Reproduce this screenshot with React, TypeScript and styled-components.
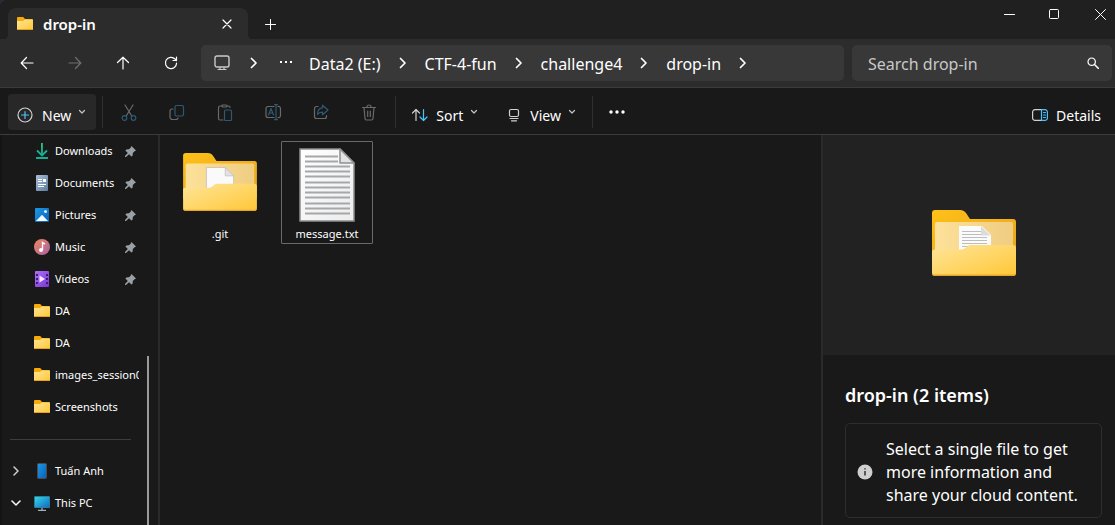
import React from 'react';
import styled, { createGlobalStyle } from 'styled-components';

const GlobalStyle = createGlobalStyle`
  *, *::before, *::after { box-sizing: border-box; }
  body {
    margin: 0;
    background: #2b2b36;
    color: #ffffff;
    font-family: 'Noto Sans', 'Open Sans', sans-serif;
  }
  button, input { font: inherit; color: inherit; }
  button { border: 0; padding: 0; background: none; }
  svg { display: block; flex: none; }
`;

const Window = styled.div`
  display: flex;
  flex-direction: column;
  min-height: 100vh;
  background: #191919;
  border-top-left-radius: 8px;
  overflow: hidden;
`;

const TitleBar = styled.header`
  display: flex;
  height: 39px;
  padding-left: 8px;
  background: #202020;
`;

const Tab = styled.div`
  position: relative;
  display: flex;
  align-items: center;
  width: 240px;
  margin-top: 8px;
  padding: 0 13px 0 9px;
  border-radius: 8px 8px 0 0;
  background: #2c2c2c;

  &::before,
  &::after {
    content: '';
    position: absolute;
    bottom: 0;
    width: 4px;
    height: 4px;
  }
  &::before {
    right: 100%;
    background: radial-gradient(circle at 0 0, transparent 4px, #2c2c2c 4px);
  }
  &::after {
    left: 100%;
    background: radial-gradient(circle at 100% 0, transparent 4px, #2c2c2c 4px);
  }
`;

const TabTitle = styled.span`
  flex: 1;
  margin-left: 10px;
  font-size: 15px;
  font-weight: 600;
  line-height: 20px;
`;

const TabClose = styled.button`
  display: grid;
  place-items: center;
  width: 16px;
  height: 16px;
`;

const NewTab = styled.button`
  display: grid;
  place-items: center;
  width: 45px;
  height: 32px;
  margin-top: 8px;
`;

const Captions = styled.div`
  display: flex;
  margin-left: auto;
`;

const CaptionButton = styled.button`
  display: grid;
  place-items: center;
  width: 45px;
  height: 28px;
  &:last-child {
    justify-items: end;
    width: 38px;
    padding-right: 9px;
  }
`;

const NavBar = styled.nav`
  display: flex;
  align-items: center;
  height: 49px;
  padding: 0 3px;
  border-bottom: 1px solid #3b3b3b;
  background: #2c2c2c;
`;

const NavButton = styled.button`
  display: grid;
  place-items: center;
  width: 48px;
  height: 36px;
  color: #ffffff;
  &:disabled { color: #6e6e6e; }
`;

const AddressBar = styled.div`
  display: flex;
  flex: 1;
  align-items: center;
  min-width: 0;
  height: 36px;
  margin: 0 8px 0 6px;
  border-radius: 5px;
  background: #383838;
  overflow: hidden;
`;

const AddressButton = styled.button<{ $width: number }>`
  display: grid;
  flex: none;
  place-items: center;
  width: ${({ $width }) => $width}px;
  height: 34px;
`;

const Crumb = styled.a`
  padding-top: 2px;
  color: #ffffff;
  font-size: 16px;
  line-height: 22px;
  white-space: nowrap;
  text-decoration: none;
`;

const SearchBox = styled.label`
  display: flex;
  align-items: center;
  width: 260px;
  height: 36px;
  padding: 0 13px 0 16px;
  border-radius: 5px;
  background: #383838;
`;

const SearchInput = styled.input`
  flex: 1;
  min-width: 0;
  padding: 2px 0 0;
  border: 0;
  outline: 0;
  background: none;
  font-size: 16px;
  line-height: 22px;
  &::placeholder { color: #c8c8c8; opacity: 1; }
`;

const Toolbar = styled.div`
  display: flex;
  align-items: center;
  height: 47px;
  padding: 2px 2px 0 4px;
  border-bottom: 1px solid #3b3b3b;
  background: #191919;
`;

const CommandGroup = styled.div`
  display: flex;
  gap: 8px;
  padding: 0 4px;
`;

const CommandButton = styled.button<{ $filled?: boolean }>`
  display: flex;
  flex: none;
  align-items: center;
  height: 36px;
  padding: 6px 8px 0;
  border-radius: 4px;
  background: ${({ $filled }) => ($filled ? '#282828' : 'transparent')};
  font-size: 14px;
  line-height: 20px;
`;

const CommandLabel = styled.span`
  margin-left: 8px;
  padding-top: 2px;
`;

const CommandChevron = styled.span`
  padding: 0 2px 6px 7px;
`;

const ToolButton = styled.button`
  display: grid;
  flex: none;
  place-items: center;
  width: 48px;
  height: 36px;
`;

const MoreButton = styled(ToolButton)`
  width: 44px;
`;

const ToolDivider = styled.div`
  flex: none;
  width: 1px;
  height: 32px;
  margin: 0 2px;
  background: #2f2f2f;
`;

const Spacer = styled.div`
  flex: 1;
`;

const Body = styled.div`
  display: flex;
  flex: 1;
`;

const Sidebar = styled.aside`
  display: flex;
  flex: none;
  width: 160px;
  border-left: 2px solid #141414;
  border-right: 2px solid #2a2a2a;
`;

const SideList = styled.nav`
  width: 137px;
  overflow: hidden;
`;

const SideLink = styled.a`
  display: flex;
  align-items: center;
  height: 32px;
  color: #ffffff;
  font-size: 11px;
  line-height: 16px;
  white-space: nowrap;
  text-decoration: none;
`;

const ExpandSlot = styled.span`
  display: grid;
  flex: none;
  place-items: center;
  width: 28px;
  margin-right: 4px;
`;

const SideLabel = styled.span`
  flex: 1;
  margin-left: 5px;
`;

const PinSlot = styled.span`
  margin-right: 3px;
`;

const SideDivider = styled.hr`
  height: 1px;
  margin: 16px 8px 15px;
  border: 0;
  background: #3d3d3d;
`;

const ScrollTrack = styled.div`
  display: flex;
  flex: 1;
  padding: 221px 0 0 8px;
`;

const ScrollThumb = styled.div`
  width: 2px;
  background: #9a9a9a;
`;

const FileArea = styled.main`
  display: flex;
  flex: 1;
  align-items: flex-start;
  gap: 15px;
  min-width: 0;
  padding: 6px 14px;
`;

const FileTile = styled.button<{ $focused?: boolean }>`
  display: flex;
  flex-direction: column;
  align-items: center;
  width: 92px;
  padding: 6px 0 0;
  border: 1px solid ${({ $focused }) => ($focused ? '#6a6a6a' : 'transparent')};
  border-radius: 1px;
`;

const FileName = styled.span`
  margin-top: 3px;
  font-size: 11px;
  line-height: 18px;
`;

const Details = styled.aside`
  flex: none;
  width: 294px;
  border-left: 2px solid #2a2a2a;
`;

const Preview = styled.div`
  display: grid;
  place-items: center;
  height: 220px;
  padding: 0 0 4px 10px;
  background: #222222;
`;

const DetailsInfo = styled.div`
  padding: 28px 13px 7px 22px;
`;

const DetailsTitle = styled.h2`
  margin: 0 0 16px;
  font-size: 18px;
  font-weight: 600;
  line-height: 24px;
`;

const Notice = styled.div`
  display: flex;
  align-items: center;
  gap: 13px;
  padding: 12px 11px 10px;
  border: 1px solid #2d2d2d;
  border-radius: 5px;
`;

const NoticeText = styled.p`
  margin: 0;
  padding-top: 2px;
  font-size: 16px;
  line-height: 23px;
`;

const Glyph = ({ w = 16, h = 16, children }: { w?: number; h?: number; children: React.ReactNode }) => (
  <svg width={w} height={h} viewBox={`0 0 ${w} ${h}`} fill="none" stroke="currentColor" strokeWidth="1.2" strokeLinecap="round" strokeLinejoin="round" aria-hidden="true">
    {children}
  </svg>
);

const GradientDefs = styled.svg`
  position: absolute;
`;

const Gradients = () => (
  <GradientDefs width="0" height="0" aria-hidden="true">
    <defs>
      <linearGradient id="front" x1="0" y1="0" x2="1" y2="1">
        <stop offset="0" stopColor="#ffe599" />
        <stop offset="1" stopColor="#ffc736" />
      </linearGradient>
      <linearGradient id="back" x1="0" y1="0" x2="1" y2="1">
        <stop offset="0" stopColor="#ffc01a" />
        <stop offset="1" stopColor="#e8a317" />
      </linearGradient>
      <linearGradient id="inside" x1="0" y1="0" x2="1" y2="0">
        <stop offset="0" stopColor="#fde19a" />
        <stop offset="1" stopColor="#efcd82" />
      </linearGradient>
      <linearGradient id="paper" x1="0" y1="0" x2="1" y2="1">
        <stop offset="0" stopColor="#ffffff" />
        <stop offset="1" stopColor="#ececec" />
      </linearGradient>
      <linearGradient id="down" x1="0" y1="0" x2="0" y2="1">
        <stop offset="0" stopColor="#2fc77c" />
        <stop offset="1" stopColor="#12a89a" />
      </linearGradient>
      <linearGradient id="doc" x1="0" y1="0" x2="1" y2="1">
        <stop offset="0" stopColor="#a9bfd6" />
        <stop offset="1" stopColor="#5d7da0" />
      </linearGradient>
      <linearGradient id="pic" x1="0" y1="0" x2="1" y2="1">
        <stop offset="0" stopColor="#1c9ae6" />
        <stop offset="1" stopColor="#0a5fb8" />
      </linearGradient>
      <linearGradient id="music" x1="0" y1="0" x2="1" y2="1">
        <stop offset="0" stopColor="#f0885a" />
        <stop offset="1" stopColor="#a860a8" />
      </linearGradient>
      <linearGradient id="video" x1="0" y1="0" x2="1" y2="1">
        <stop offset="0" stopColor="#b071f5" />
        <stop offset="1" stopColor="#7a35d8" />
      </linearGradient>
      <linearGradient id="screen" x1="0" y1="0" x2="1" y2="1">
        <stop offset="0" stopColor="#36dbe0" />
        <stop offset="1" stopColor="#1166c9" />
      </linearGradient>
    </defs>
  </GradientDefs>
);

const SmallFolder = () => (
  <svg width="16" height="16" viewBox="0 0 16 16" aria-hidden="true">
    <path d="M0 2a1 1 0 0 1 1-1h5.200L8 3h7a1 1 0 0 1 1 1v8H0z" fill="#f7ab0b" />
    <path d="M0 5h6l2-1.600h7a1 1 0 0 1 1 1V13a1 1 0 0 1-1 1H1a1 1 0 0 1-1-1z" fill="url(#front)" />
    <path d="M0 13h16a1 1 0 0 1-1 1H1a1 1 0 0 1-1-1z" fill="#e6a41c" />
  </svg>
);

const BigFolder = ({ width, height, lined }: { width: number; height: number; lined?: boolean }) => (
  <svg width={width} height={height} viewBox="0 0 84 66" aria-hidden="true">
    <path d="M0 3a3 3 0 0 1 3-3h25c3 0 5 1.500 6 3l4 6h43a3 3 0 0 1 3 3v40H0z" fill="url(#back)" />
    <path d="M3 14a2 2 0 0 1 2-2h74a2 2 0 0 1 2 2v28H3z" fill="url(#inside)" />
    {lined ? (
      <>
        <path d="M27 16h23l9 9v20H27z" fill="#fbfbfb" />
        <path d="M30 21.500h19M30 24.500h19M30 27.500h25M30 30.500h25M30 33.500h25M30 36.500h25" stroke="#bdbdbd" />
        <path d="M49 16l9.500 9.500H49z" fill="#dcdcdc" />
      </>
    ) : (
      <>
        <path d="M26.500 16.500H48l9.500 9.500v20h-31z" fill="#fafafa" stroke="#c9c2b0" />
        <path d="M48 16.500V26h9.500z" fill="#e2e2e2" stroke="#c4c4c4" />
      </>
    )}
    <path d="M0 41a3 3 0 0 1 3-1.500h25c3 0 4-.5 6-2l1-1c1.500-1.200 2.500-1.500 4-1.500h42a3 3 0 0 1 3 3v25a3 3 0 0 1-3 3H3a3 3 0 0 1-3-3z" fill="url(#front)" />
    <path d="M0 63a3 2 0 0 0 3 1.500h78a3 2 0 0 0 3-1.500a3 3 0 0 1-3 3H3a3 3 0 0 1-3-3z" fill="#e5a62a" />
  </svg>
);

const TextFile = () => (
  <svg width="56" height="74" viewBox="0 0 56 74" aria-hidden="true">
    <path d="M1 1h40l14 14v58H1z" fill="url(#paper)" stroke="#8f8f8f" strokeWidth="1.500" />
    <path d="M6 8.500h33M6 13.500h33M6 18.500h45M6 23.500h45M6 28.500h45M6 34.500h45M6 39.500h45M6 44.500h45M6 49.500h45M6 55.500h45M6 60.500h45M6 65.500h45" stroke="#a5a7a9" strokeWidth="1.800" />
    <path d="M41 1v14h14z" fill="#e3e3e3" stroke="#8f8f8f" strokeWidth="1.500" strokeLinejoin="round" />
  </svg>
);

const DownloadIcon = () => (
  <svg width="16" height="16" viewBox="0 0 16 16" fill="none" stroke="url(#down)" strokeWidth="1.800" aria-hidden="true">
    <path d="M7.900 0L8 12M3 7.500l5 5 5-5" />
    <path d="M2 15h12" stroke="#17ab93" />
  </svg>
);

const DocumentIcon = () => (
  <svg width="16" height="16" viewBox="0 0 16 16" aria-hidden="true">
    <rect x="2" y="0" width="12" height="16" rx="1" fill="url(#doc)" />
    <path d="M4 4.500h4M4 6.500h4M4 9.500h8M4 11.500h6" stroke="#fff" />
    <rect x="9" y="4" width="3" height="3" fill="#fff" />
  </svg>
);

const PictureIcon = () => (
  <svg width="16" height="16" viewBox="0 0 16 16" aria-hidden="true">
    <rect x="1" y="1" width="14" height="14" rx="1" fill="url(#pic)" />
    <path d="M2 14l5.300-5.600a1 1 0 0 1 1.400 0L14 14z" fill="#f4faff" />
    <circle cx="11.500" cy="4.500" r="1.500" fill="#d9f0ff" />
  </svg>
);

const MusicIcon = () => (
  <svg width="16" height="16" viewBox="0 0 16 16" aria-hidden="true">
    <circle cx="8" cy="8" r="8" fill="url(#music)" />
    <circle cx="7" cy="11" r="2" fill="#fff" />
    <path d="M8.500 11V3.500L11 5.200" stroke="#fff" strokeWidth="1.400" fill="none" />
  </svg>
);

const VideoIcon = () => (
  <svg width="16" height="16" viewBox="0 0 16 16" aria-hidden="true">
    <rect x="1" y="0" width="14" height="16" rx="1" fill="url(#video)" />
    <path d="M3 3v11M13 3v11" stroke="#3c1a80" strokeWidth="2" strokeDasharray="2 2" />
    <path d="M5.500 4.500v7L11 8z" fill="#f3eaff" />
  </svg>
);

const PhoneIcon = () => (
  <svg width="16" height="16" viewBox="0 0 16 16" aria-hidden="true">
    <rect x="3.500" y="0.500" width="9" height="15" rx="1" fill="url(#pic)" stroke="#4a4a4a" />
  </svg>
);

const ComputerIcon = () => (
  <svg width="16" height="16" viewBox="0 0 16 16" aria-hidden="true">
    <rect x="0.500" y="1.500" width="15" height="11" rx="0.500" fill="url(#screen)" stroke="#2a7f9c" />
    <path d="M8 13v2M4 15.400h8" stroke="#9fb0ba" strokeWidth="1.300" />
  </svg>
);

const PinIcon = () => (
  <svg width="11" height="11" viewBox="0 0 11 11" aria-hidden="true">
    <path d="M6.500 0L11 4.500l-1.400.7-1.800 1.800-.2 2.700-1.100.9L4 8.200 1 11H0v-1l2.800-3L.4 4.500l.9-1.100 2.700-.2 1.800-1.800z" fill="#98a1a6" />
  </svg>
);

const CrumbArrow = () => (
  <Glyph w={8} h={12}><path d="M1.500 1.500L6 6l-4.500 4.500" strokeWidth="1.700" /></Glyph>
);

const DropArrow = () => (
  <Glyph w={8} h={6}><path d="M1.500 1.500L4 4l2.500-2.500" stroke="#c4c4c4" /></Glyph>
);

const crumbs = ['Data2 (E:)', 'CTF-4-fun', 'challenge4', 'drop-in'];

const places = [
  { name: 'Downloads', Icon: DownloadIcon, pinned: true },
  { name: 'Documents', Icon: DocumentIcon, pinned: true },
  { name: 'Pictures', Icon: PictureIcon, pinned: true },
  { name: 'Music', Icon: MusicIcon, pinned: true },
  { name: 'Videos', Icon: VideoIcon, pinned: true },
  { name: 'DA', Icon: SmallFolder },
  { name: 'DA', Icon: SmallFolder },
  { name: 'images_session0', Icon: SmallFolder },
  { name: 'Screenshots', Icon: SmallFolder },
];

const dim = '#6a6a6a';
const dimBlue = '#2c5a74';

const tools = [
  { label: 'Cut', art: <><path d="M4 1l6.800 11M12 1L5.200 12" stroke={dim} /><circle cx="3.500" cy="14" r="2.300" stroke={dimBlue} /><circle cx="12.500" cy="14" r="2.300" stroke={dimBlue} /></> },
  { label: 'Copy', art: <><path d="M4 5H3a2 2 0 0 0-2 2v6a2.500 2.500 0 0 0 2.500 2.500H7A2 2 0 0 0 9 14" stroke={dim} /><rect x="6" y="1.500" width="8.500" height="10.500" rx="1.500" stroke={dimBlue} /></> },
  { label: 'Paste', art: <><path d="M5 2H3a1.500 1.500 0 0 0-1.500 1.500v11A1.500 1.500 0 0 0 3 16h3M10 2h1.500A1.500 1.500 0 0 1 13 3.500" stroke={dim} /><rect x="5" y="1" width="5" height="2" rx="1" stroke={dim} /><rect x="7.500" y="6" width="7" height="10.500" rx="1" stroke={dimBlue} /></> },
  { label: 'Rename', art: <><path d="M9 2.500H3a2 2 0 0 0-2 2v7a2 2 0 0 0 2 2h6M13 2.500a2 2 0 0 1 2.500 2v7a2 2 0 0 1-2.500 2" stroke={dim} /><path d="M11 1v14.500M9.500 .6h3M9.500 15.600h3M3.500 11L6 4.500 8.500 11M4.300 9h3.400" stroke={dimBlue} /></> },
  { label: 'Share', art: <><path d="M5 2.500H3.500A2 2 0 0 0 1.500 4.500v8a2 2 0 0 0 2 2h8a2 2 0 0 0 2-2v-1" stroke={dim} /><path d="M9.500 1.200l5.500 4.800-5.500 4.800V8.200C7 8 5.500 9 4.500 10.500 4.500 6.500 6.500 4 9.500 3.800z" stroke={dimBlue} /></> },
  { label: 'Delete', art: <><path d="M1.500 3.500h13M6 3.500V3a2 2 0 0 1 4 0v.5M3 3.500l1 11A1.500 1.500 0 0 0 5.500 16h5a1.500 1.500 0 0 0 1.500-1.500l1-11M6.700 7v5.500M9.300 7v5.500" stroke={dim} /></> },
];

const App = () => (
  <>
    <GlobalStyle />
    <Gradients />
    <Window>
      <TitleBar>
        <Tab>
          <SmallFolder />
          <TabTitle>drop-in</TabTitle>
          <TabClose aria-label="Close tab">
            <Glyph w={10} h={10}><path d="M1 1l8 8M9 1L1 9" /></Glyph>
          </TabClose>
        </Tab>
        <NewTab aria-label="New tab">
          <Glyph w={11} h={11}><path d="M5.500 .5v10M.5 5.500h10" strokeWidth="1" /></Glyph>
        </NewTab>
        <Captions>
          <CaptionButton aria-label="Minimize">
            <Glyph w={11} h={11}><path d="M.5 5.500h10" strokeWidth="1" /></Glyph>
          </CaptionButton>
          <CaptionButton aria-label="Maximize">
            <Glyph w={11} h={11}><rect x=".5" y=".5" width="9" height="9" rx="1" strokeWidth="1" /></Glyph>
          </CaptionButton>
          <CaptionButton aria-label="Close">
            <Glyph w={11} h={11}><path d="M.5 .5l10 10M10.500 .5l-10 10" strokeWidth="1" /></Glyph>
          </CaptionButton>
        </Captions>
      </TitleBar>

      <NavBar>
        <NavButton aria-label="Back">
          <Glyph w={14} h={14}><path d="M13 7H1.500M6.500 1.500L1.200 7l5.300 5.500" /></Glyph>
        </NavButton>
        <NavButton aria-label="Forward" disabled>
          <Glyph w={14} h={14}><path d="M1 7h11.500M7.500 1.500L12.800 7l-5.300 5.500" /></Glyph>
        </NavButton>
        <NavButton aria-label="Up">
          <Glyph w={14} h={14}><path d="M7 13V1.500M1.500 6.500L7 1.200l5.500 5.300" /></Glyph>
        </NavButton>
        <NavButton aria-label="Refresh">
          <Glyph w={14} h={14}><path d="M12.600 7A5.600 5.600 0 1 1 11 3l1.500 1.500M12.500 1v3.500H9" /></Glyph>
        </NavButton>
        <AddressBar>
          <AddressButton $width={42} aria-label="This PC">
            <Glyph><rect x="1" y="1" width="14" height="11" rx="2" stroke="#c9c9c9" strokeWidth="1.400" /><path d="M6 12.500v2M10 12.500v2M4 14.500h8" stroke="#c9c9c9" /></Glyph>
          </AddressButton>
          <AddressButton $width={22} aria-label="Expand"><CrumbArrow /></AddressButton>
          <AddressButton $width={44} aria-label="Hidden folders">
            <Glyph w={16} h={6}><path d="M1 2h2M6 2h2M11 2h2" strokeWidth="2" strokeLinecap="butt" /></Glyph>
          </AddressButton>
          {crumbs.map((crumb) => (
            <React.Fragment key={crumb}>
              <Crumb href="#">{crumb}</Crumb>
              <AddressButton $width={44} aria-label={`Folders in ${crumb}`}><CrumbArrow /></AddressButton>
            </React.Fragment>
          ))}
        </AddressBar>
        <SearchBox>
          <SearchInput type="text" placeholder="Search drop-in" aria-label="Search drop-in" />
          <Glyph w={12} h={12}><circle cx="4.700" cy="4.700" r="3.700" /><path d="M7.500 7.500l4 4" strokeWidth="1.500" /></Glyph>
        </SearchBox>
      </NavBar>

      <Toolbar>
        <CommandGroup>
          <CommandButton $filled>
            <Glyph w={18} h={18}>
              <circle cx="9" cy="9" r="7" stroke="#d0d0d0" />
              <path d="M9 5.500v7M5.500 9h7" stroke="#4cc2ff" />
            </Glyph>
            <CommandLabel>New</CommandLabel>
            <CommandChevron><DropArrow /></CommandChevron>
          </CommandButton>
        </CommandGroup>
        <ToolDivider />
        {tools.map(({ label, art }) => (
          <ToolButton key={label} aria-label={label} disabled>
            <Glyph w={17} h={17}>{art}</Glyph>
          </ToolButton>
        ))}
        <ToolDivider />
        <CommandGroup>
          <CommandButton>
            <Glyph w={18} h={14}>
              <path d="M6 12.500V1.500M2.500 5L6 1.500 9.500 5" stroke="#d0d0d0" />
              <path d="M13.500 1.500v11M10 9l3.500 3.500L17 9" stroke="#4cc2ff" />
            </Glyph>
            <CommandLabel>Sort</CommandLabel>
            <CommandChevron><DropArrow /></CommandChevron>
          </CommandButton>
          <CommandButton>
            <Glyph w={18} h={14}>
              <rect x="5.500" y="1.500" width="9" height="7" rx="1.500" stroke="#d0d0d0" />
              <path d="M6 10.500h8M7.500 12.800h5" stroke="#d0d0d0" />
            </Glyph>
            <CommandLabel>View</CommandLabel>
            <CommandChevron><DropArrow /></CommandChevron>
          </CommandButton>
        </CommandGroup>
        <ToolDivider />
        <MoreButton aria-label="See more">
          <svg width="16" height="4" viewBox="0 0 16 4" fill="#fff" aria-hidden="true">
            <circle cx="2" cy="2" r="1.700" /><circle cx="8" cy="2" r="1.700" /><circle cx="14" cy="2" r="1.700" />
          </svg>
        </MoreButton>
        <Spacer />
        <CommandGroup>
          <CommandButton>
            <Glyph w={16} h={12}>
              <path d="M9.500 .6H3a2.400 2.400 0 0 0-2.400 2.400v6A2.400 2.400 0 0 0 3 11.400h6.500" stroke="#d0d0d0" />
              <path d="M9.500 .6H13a2.400 2.400 0 0 1 2.400 2.400v6a2.400 2.400 0 0 1-2.400 2.400H9.500zM11.500 3.500h2M11.500 6h2M11.500 8.500h2" stroke="#4cc2ff" />
            </Glyph>
            <CommandLabel>Details</CommandLabel>
          </CommandButton>
        </CommandGroup>
      </Toolbar>

      <Body>
        <Sidebar>
          <SideList aria-label="Places">
            {places.map(({ name, Icon, pinned }, i) => (
              <SideLink key={i} href="#">
                <ExpandSlot />
                <Icon />
                <SideLabel>{name}</SideLabel>
                {pinned && <PinSlot><PinIcon /></PinSlot>}
              </SideLink>
            ))}
            <SideDivider />
            <SideLink href="#">
              <ExpandSlot><Glyph w={8} h={10}><path d="M2 1l4 4-4 4" stroke="#d0d0d0" strokeWidth="1.500" /></Glyph></ExpandSlot>
              <PhoneIcon />
              <SideLabel>Tuấn Anh</SideLabel>
            </SideLink>
            <SideLink href="#">
              <ExpandSlot><Glyph w={10} h={8}><path d="M1 2l4 4 4-4" strokeWidth="1.500" /></Glyph></ExpandSlot>
              <ComputerIcon />
              <SideLabel>This PC</SideLabel>
            </SideLink>
          </SideList>
          <ScrollTrack><ScrollThumb /></ScrollTrack>
        </Sidebar>

        <FileArea>
          <FileTile>
            <svg width="74" height="74" viewBox="0 0 74 74" aria-hidden="true">
              <g transform="translate(0 5)"><BigFolder width={74} height={58} /></g>
            </svg>
            <FileName>.git</FileName>
          </FileTile>
          <FileTile $focused>
            <TextFile />
            <FileName>message.txt</FileName>
          </FileTile>
        </FileArea>

        <Details>
          <Preview><BigFolder width={84} height={66} lined /></Preview>
          <DetailsInfo>
            <DetailsTitle>drop-in (2 items)</DetailsTitle>
            <Notice>
              <svg width="16" height="16" viewBox="0 0 16 16" aria-hidden="true">
                <circle cx="8" cy="8" r="7.500" fill="#cfcfcf" />
                <path d="M8 7v4.500M8 4.200v1.400" stroke="#191919" strokeWidth="1.300" />
              </svg>
              <NoticeText>Select a single file to get more information and share your cloud content.</NoticeText>
            </Notice>
          </DetailsInfo>
        </Details>
      </Body>
    </Window>
  </>
);

export default App;
